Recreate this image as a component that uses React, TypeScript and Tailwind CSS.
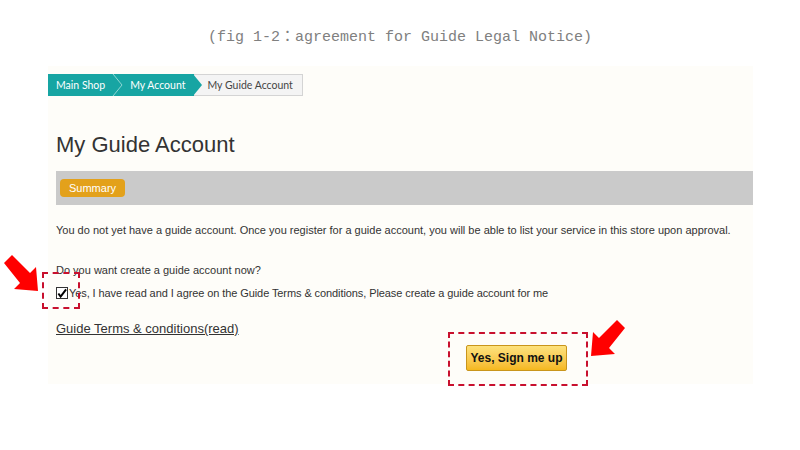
import React from "react";

function DownRightArrow() {
  return (
    <svg width="42" height="42" viewBox="0 0 42 42" className="absolute left-[2px] top-[253px]">
      <polygon points="2,10 10,2 28,20 34,14 36,38 12,36 18,30" fill="#ff0000" />
    </svg>
  );
}

function DownLeftArrow() {
  return (
    <svg width="42" height="42" viewBox="0 0 42 42" className="absolute left-[585px] top-[318px]">
      <polygon points="40,10 32,2 14,20 8,14 6,38 30,36 24,30" fill="#ff0000" />
    </svg>
  );
}

export default function App() {
  return (
    <div className="relative w-[800px] h-[450px] bg-white overflow-hidden" style={{ fontFamily: "Arial, 'Liberation Sans', sans-serif" }}>
      <div className="h-[66px] pt-[28px] text-center text-[#808080] text-[15px] leading-[20px]" style={{ fontFamily: "'Liberation Mono', 'Noto Sans CJK JP', monospace" }}>
        (fig 1-2：agreement for Guide Legal Notice)
      </div>
      <div className="ml-[48px] w-[705px] h-[318px] bg-[#fefdf9] pt-[8px]">
        {/* breadcrumb */}
        <div className="flex h-[22px] items-stretch text-[10.5px] leading-[22px] whitespace-nowrap" style={{ fontFamily: "Lato, 'Open Sans', sans-serif" }}>
          <div className="relative flex items-stretch bg-[#17a5a3] text-white">
            <span className="pl-[8px] pr-[6px]">Main Shop</span>
            <svg width="14" height="22" viewBox="0 0 14 22" className="shrink-0">
              <polyline points="2,0 11,11 2,22" fill="none" stroke="#8fd6d4" strokeWidth="1" />
            </svg>
            <span className="pl-[5px] pr-[9px]">My Account</span>
          </div>
          <svg width="10" height="22" viewBox="0 0 10 22" className="shrink-0 -ml-px">
            <rect x="0" y="0" width="10" height="22" fill="#f4f4f4" />
            <line x1="0" y1="0.5" x2="10" y2="0.5" stroke="#d4d4d4" />
            <line x1="0" y1="21.5" x2="10" y2="21.5" stroke="#d4d4d4" />
            <polygon points="0,0 9,11 0,22" fill="#17a5a3" />
          </svg>
          <div className="w-[100px] bg-[#f4f4f4] border-y border-r border-[#d4d4d4] text-[#444] pl-[4px] leading-[20px]">
            My Guide Account
          </div>
        </div>
        <div className="pl-[8px]">
          <h1 className="mt-[36px] text-[22px] leading-[26px] text-[#333]">My Guide Account</h1>
          <div className="mt-[13px] h-[34px] bg-[#cacaca] flex items-center pl-[4px]">
            <span className="bg-[#e3a11b] text-white text-[11px] leading-[18px] px-[9px] rounded-[4px]">Summary</span>
          </div>
          <p className="mt-[18px] text-[11px] leading-[14px] text-[#333]">
            You do not yet have a guide account. Once you register for a guide account, you will be able to list your service in this store upon approval.
          </p>
          <p className="mt-[26px] text-[11px] leading-[14px] text-[#333]">Do you want create a guide account now?</p>
          <div className="mt-[9px] flex items-center text-[11px] leading-[14px] text-[#333] tracking-[-0.09px]">
            <span className="w-[12px] h-[12px] border border-[#333] bg-white flex items-center justify-center mr-[1px]">
              <svg width="11" height="11" viewBox="0 0 11 11">
                <polyline points="1.5,5.5 4,9 10,1" fill="none" stroke="#000" strokeWidth="2.2" />
              </svg>
            </span>
            Yes, I have read and I agree on the Guide Terms &amp; conditions, Please create a guide account for me
          </div>
          <div className="mt-[20px] text-[13px] leading-[18px] text-[#333] underline">Guide Terms &amp; conditions(read)</div>
          <div className="mt-[7px] pl-[410px]">
            <button className="h-[26px] w-[101px] border border-[#c9951c] rounded-[2px] bg-gradient-to-b from-[#fde27c] to-[#f5b81c] text-[12px] font-bold text-[#111]">
              Yes, Sign me up
            </button>
          </div>
        </div>
      </div>
      {/* annotations */}
      <div className="absolute left-[42px] top-[272px] w-[38px] h-[37px] border-2 border-dashed border-[#c8102e]" />
      <div className="absolute left-[448px] top-[332px] w-[140px] h-[54px] border-2 border-dashed border-[#c8102e]" />
      <DownRightArrow />
      <DownLeftArrow />
    </div>
  );
}
